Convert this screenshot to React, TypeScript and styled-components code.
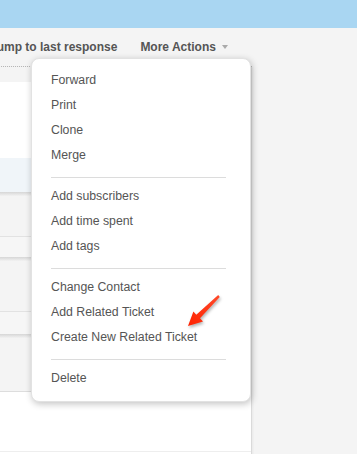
import styled, { createGlobalStyle } from 'styled-components';

const GlobalStyle = createGlobalStyle`
  html, body {
    margin: 0;
    padding: 0;
    background: #f4f4f4;
  }
  body {
    font-family: "Liberation Sans", Arial, Helvetica, sans-serif;
    -webkit-font-smoothing: antialiased;
  }
`;

const Page = styled.div`
  position: relative;
  width: 357px;
  height: 454px;
  overflow: hidden;
  background: #f4f4f4;
`;

const TopBar = styled.div`
  height: 28px;
  background: #a9d6f2;
`;

const LeftColumn = styled.div`
  position: relative;
  width: 252px;
`;

const Toolbar = styled.div`
  display: flex;
  align-items: center;
  gap: 23px;
  height: 39px;
  padding-bottom: 1px;
  box-sizing: border-box;
  border-bottom: 1px dotted #b9b9b9;
  margin-left: -10px;
  font-size: 12px;
  font-weight: bold;
  color: #555;
`;

const ToolLink = styled.span`
  display: inline-flex;
  align-items: center;
  gap: 6px;
  white-space: nowrap;
`;

const Caret = styled.span`
  width: 0;
  height: 0;
  margin-top: 1px;
  border-left: 3.5px solid transparent;
  border-right: 3.5px solid transparent;
  border-top: 4px solid #aaa;
`;

const Rows = styled.div`
  display: flex;
  flex-direction: column;
  border-right: 1px solid #dadada;
  box-shadow: 1px 0 2px rgba(0, 0, 0, 0.05);
`;

const Row = styled.div<{ $h: number; $bg: string; $line?: string }>`
  height: ${(p) => p.$h}px;
  background: ${(p) => p.$bg};
  border-bottom: ${(p) => (p.$line ? `1px solid ${p.$line}` : 'none')};
`;

const Shade = styled.div`
  height: 4px;
  background: linear-gradient(#d6d6d6, #f2f2f2);
`;

const Menu = styled.div`
  position: absolute;
  left: 31px;
  top: 30px;
  width: 220px;
  box-sizing: border-box;
  padding: 9px 0 10px;
  background: #fff;
  border: 1px solid #e2e2e2;
  border-radius: 8px;
  box-shadow: 1px 2px 7px rgba(0, 0, 0, 0.24);
`;

const MenuItem = styled.div`
  height: 25px;
  line-height: 25px;
  padding-left: 19px;
  font-size: 12.3px;
  color: #555;
  white-space: nowrap;
`;

const Divider = styled.div`
  height: 1px;
  margin: 9px 24px 6px 19px;
  background: #dcdcdc;
`;

const Arrow = styled.svg`
  position: absolute;
  left: 180px;
  top: 285px;
  width: 50px;
  height: 50px;
  filter: drop-shadow(1px 2px 1.5px rgba(0, 0, 0, 0.3));
`;

const groups = [
  ['Forward', 'Print', 'Clone', 'Merge'],
  ['Add subscribers', 'Add time spent', 'Add tags'],
  ['Change Contact', 'Add Related Ticket', 'Create New Related Ticket'],
  ['Delete'],
];

export default function App() {
  return (
    <Page>
      <GlobalStyle />
      <TopBar />
      <LeftColumn>
        <Toolbar>
          <ToolLink>Jump to last response</ToolLink>
          <ToolLink>
            More Actions
            <Caret />
          </ToolLink>
        </Toolbar>
        <Rows>
          <Row $h={15} $bg="#f4f4f4" />
          <Row $h={76} $bg="#ffffff" />
          <Row $h={34} $bg="#f0f5f9" />
          <Shade />
          <Row $h={40} $bg="#f4f4f4" $line="#e2e2e2" />
          <Row $h={20} $bg="#f6f6f6" />
          <Shade />
          <Row $h={50} $bg="#f4f4f4" $line="#e2e2e2" />
          <Row $h={22} $bg="#f6f6f6" />
          <Shade />
          <Row $h={53} $bg="#f4f4f4" $line="#dddddd" />
          <Row $h={59} $bg="#ffffff" $line="#eeeeee" />
          <Row $h={10} $bg="#ffffff" />
        </Rows>
        <Menu>
          {groups.map((items, gi) => (
            <div key={gi}>
              {gi > 0 && <Divider />}
              {items.map((label) => (
                <MenuItem key={label}>{label}</MenuItem>
              ))}
            </div>
          ))}
        </Menu>
      </LeftColumn>
      <Arrow viewBox="0 0 50 50">
        <defs>
          <linearGradient id="arrowFill" x1="0" y1="1" x2="1" y2="0">
            <stop offset="0" stopColor="#ff2200" />
            <stop offset="1" stopColor="#ff4a2a" />
          </linearGradient>
        </defs>
        <polygon
          points="8,41 23,36.4 20,33.2 39.8,12 38.2,10 16.3,29.8 13.4,26.4"
          fill="url(#arrowFill)"
        />
      </Arrow>
    </Page>
  );
}
